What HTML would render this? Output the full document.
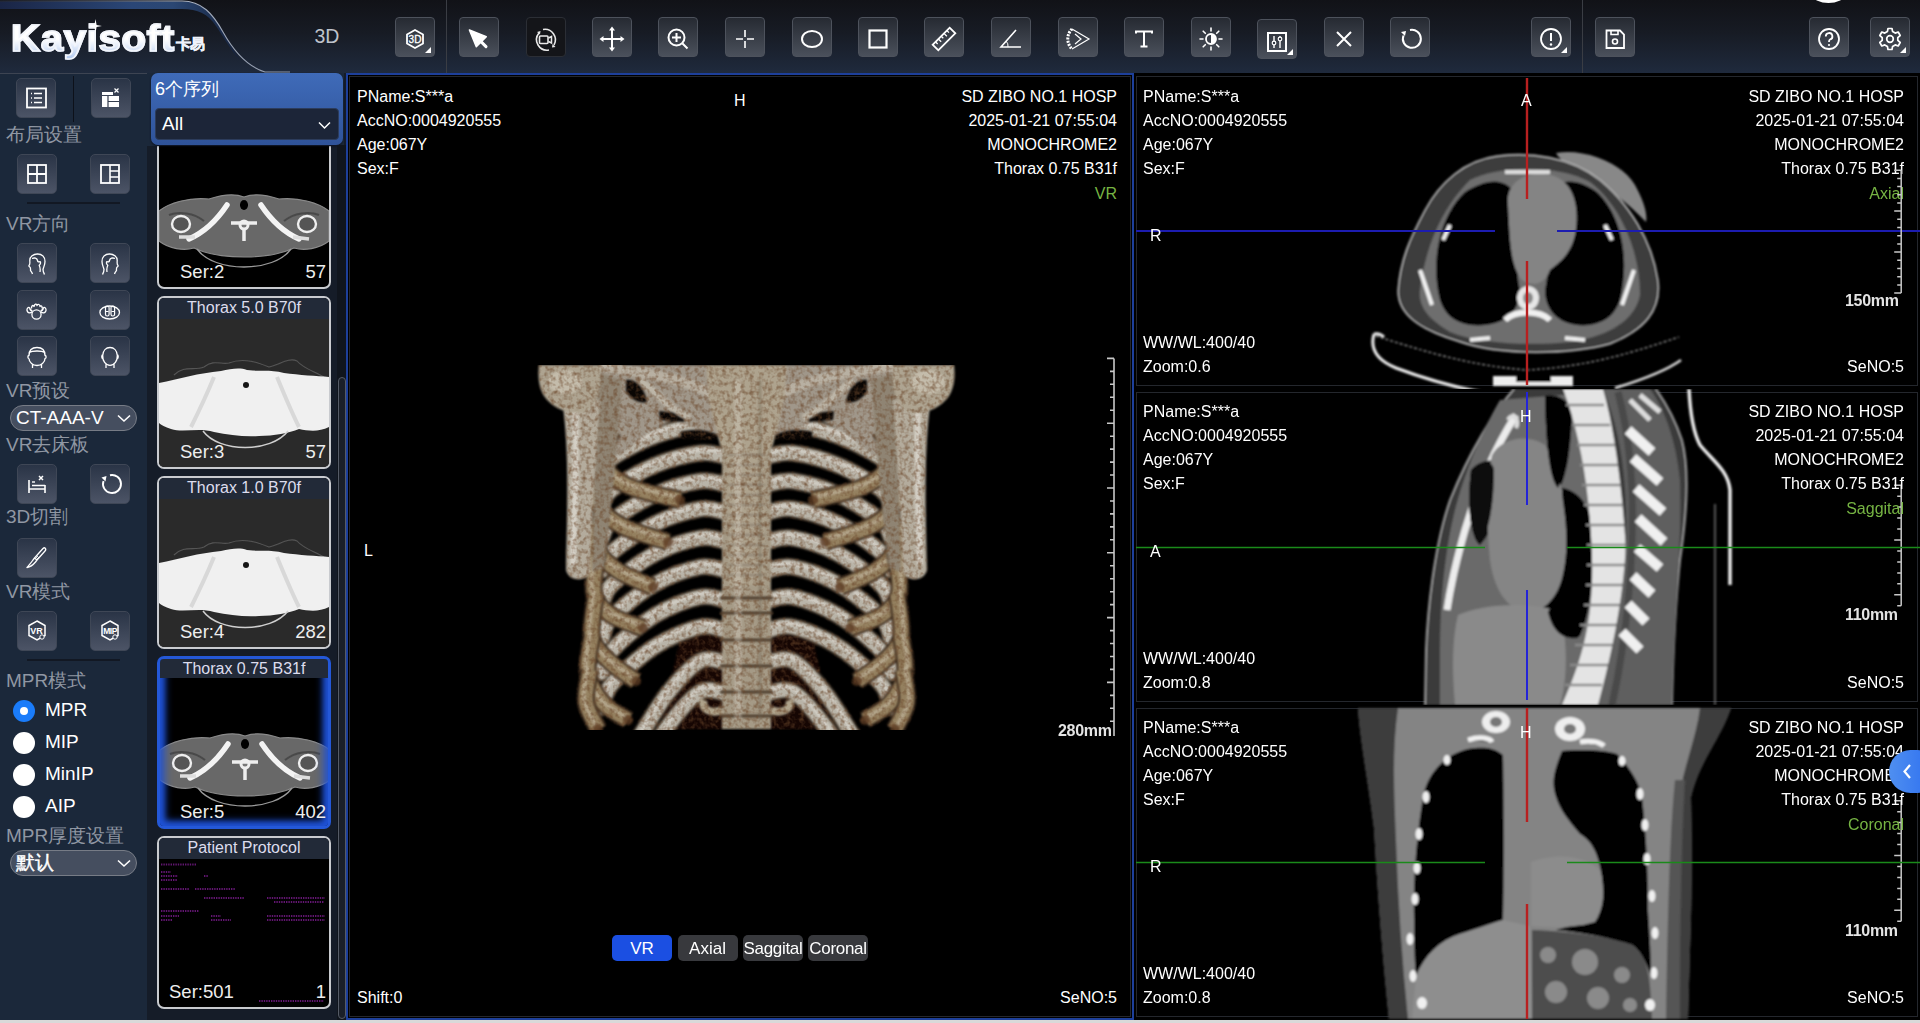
<!DOCTYPE html>
<html><head><meta charset="utf-8">
<style>
*{box-sizing:border-box;margin:0;padding:0}
html,body{width:1920px;height:1023px;overflow:hidden;background:#d9d9d9;font-family:"Liberation Sans",sans-serif}
.abs{position:absolute}
#hdr{left:0;top:0;width:1920px;height:73px;background:linear-gradient(#111217 0%,#171b24 45%,#1f2a3d 100%)}
.tb{position:absolute;top:17px;width:40px;height:40px;border-radius:4px;border:1px solid #4d525c;background:linear-gradient(#262a32,#4a505b)}
.tb svg{position:absolute;left:0;top:1.6px;width:38px;height:38px}
.tb.act{background:#141519;border-color:#2b2e35}
.corner{position:absolute;right:3px;bottom:3px;width:0;height:0;border-left:6px solid transparent;border-bottom:6px solid #fff}
.vsep{position:absolute;top:0;width:1px;height:73px;background:#3a3d44}
#side{left:0;top:73px;width:147px;height:947px;background:#1b283a;border-top:1px solid #3d4452}
.sb{position:absolute;width:40px;height:40px;border-radius:5px;border:1px solid #3f4756;background:linear-gradient(#2a3446,#4c5466)}
.sb svg{position:absolute;left:0;top:0;width:38px;height:38px}
.lbl{position:absolute;left:6px;font-size:19px;color:#9097a3;line-height:20px;white-space:nowrap}
.hsep{position:absolute;left:27px;width:93px;height:2px;background:#121823}
.pill{position:absolute;left:10px;width:127px;height:26px;border-radius:13px;border:1px solid #777c86;background:#454e5f;color:#fff;font-size:19px;line-height:24px;padding-left:5px}
.pill svg{position:absolute;right:5px;top:7.5px}
.radio{position:absolute;left:13px;width:22px;height:22px;border-radius:50%;background:#fff}
.rl{position:absolute;left:45px;font-size:19px;color:#fff;line-height:20px;margin-top:-1px}
#ser{left:147px;top:73px;width:199px;height:947px;background:#151c28}
.card{position:absolute;left:10px;width:174px;height:173px;border:2px solid #c9cbcf;border-radius:7px;background:#000;overflow:hidden}
.card .tt{position:absolute;left:0;top:0;width:100%;height:21px;background:#222a38;color:#dde;font-size:16px;line-height:20px;text-align:center}
.card .sn{position:absolute;left:21px;bottom:5.5px;font-size:18.5px;color:#eee;line-height:20px}
.card .nm{position:absolute;right:3px;bottom:5.5px;font-size:18.5px;color:#eee;line-height:20px}
.vp{position:absolute;background:#000;overflow:hidden}
.ib{position:absolute;border:1px solid #24272d}
.ov{position:absolute;font-size:16px;color:#fff;line-height:24px;white-space:nowrap}
.ov.r{text-align:right}
.grn{color:#76b443}
.mm{font-size:16px;font-weight:bold;color:#e4e4e4;letter-spacing:-0.3px;line-height:18px}
</style></head><body>
<!-- HEADER -->
<div id="hdr" class="abs">
  <svg class="abs" style="left:0;top:0" width="300" height="73" viewBox="0 0 300 73">
    <defs>
      <linearGradient id="tabg" x1="0" y1="0" x2="1" y2="0">
        <stop offset="0" stop-color="#1a2545"/><stop offset="0.55" stop-color="#2a4676"/><stop offset="0.72" stop-color="#2b4773"/><stop offset="1" stop-color="#14203a"/>
      </linearGradient>
      <linearGradient id="tabl" x1="0" y1="0" x2="1" y2="0">
        <stop offset="0" stop-color="#5a6478" stop-opacity="0.3"/><stop offset="0.6" stop-color="#aab3c4"/><stop offset="1" stop-color="#8d96a8"/>
      </linearGradient>
    </defs>
    
    <path d="M0 1.5 H182 C202 1.5 213 14 223 32 C230 44 236 54 240 60 C232 52 224 38 216 26 C208 14 198 9 182 9 H0Z" fill="url(#tabg)"/>
    <path d="M0 1 H182 C202 1 213 14 223 32 C233 50 246 66 265 72 H290" fill="none" stroke="url(#tabl)" stroke-width="1.1"/>
  </svg>
  <div class="abs" style="left:11px;top:17px;font-size:36px;font-weight:bold;letter-spacing:0.6px;line-height:44px;white-space:nowrap;background:linear-gradient(#ffffff 50%,#aac4f0 100%);-webkit-background-clip:text;background-clip:text;-webkit-text-fill-color:transparent;-webkit-text-stroke:1.6px #f2f5fb;transform:scaleX(1.115);transform-origin:0 0">Kayisoft</div>
  <div class="abs" style="left:176px;top:34px;font-size:15px;font-weight:bold;color:#eef2fa;line-height:20px;letter-spacing:-1px;-webkit-text-stroke:0.5px #eef2fa">卡易</div>
  <svg class="abs" style="left:89px;top:19px" width="13" height="14" viewBox="0 0 13 14"><path d="M6.5 0 L7.6 5.9 L13 7 L7.6 8.1 L6.5 14 L5.4 8.1 L0 7 L5.4 5.9Z" fill="#fff"/></svg>
  <div class="abs" style="left:314.5px;top:25px;font-size:19.5px;color:#bfc3cb">3D</div>
  <div class="vsep" style="left:446px"></div>
  <div class="vsep" style="left:1582px"></div>

  <!-- 3D -->
  <div class="tb" style="left:395px"><svg viewBox="0 0 38 38"><path d="M19 10 L27 14.5 V23.5 L19 28 L11 23.5 V14.5Z" fill="none" stroke="#fff" stroke-width="1.8"/><text x="19" y="23" font-size="10" font-family="Liberation Sans" fill="#fff" stroke="#fff" stroke-width="0.3" text-anchor="middle">3D</text></svg><div class="corner"></div></div>
  <!-- cursor -->
  <div class="tb" style="left:459px"><svg viewBox="0 0 38 38"><path d="M9.4 10 L26.3 16.6 L16.3 26.6 Z" fill="#fff" stroke="#fff" stroke-width="1.5" stroke-linejoin="round"/><path d="M19 19.6 L26 26.6" stroke="#fff" stroke-width="3" stroke-linecap="round"/></svg></div>
  <!-- rotate cam -->
  <div class="tb act" style="left:526px"><svg viewBox="0 0 38 38"><path d="M12 13 A10.5 10.5 0 0 0 22 30" fill="none" stroke="#e8e8e8" stroke-width="1.6"/><path d="M16 9.5 A10.5 10.5 0 0 1 27 25" fill="none" stroke="#e8e8e8" stroke-width="1.6"/><path d="M10 12 L13.5 11 L13 14.5Z" fill="#e8e8e8"/><path d="M28.5 27 L25 27.5 L25.5 24Z" fill="#e8e8e8"/><rect x="12.5" y="16" width="8.5" height="7.5" rx="1" fill="none" stroke="#e8e8e8" stroke-width="1.6"/><path d="M21.5 18 L24.5 16.5 V23 L21.5 21.5" fill="none" stroke="#e8e8e8" stroke-width="1.5"/></svg></div>
  <!-- move -->
  <div class="tb" style="left:592px"><svg viewBox="0 0 38 38"><path d="M19 8 V30 M8 19 H30" stroke="#fff" stroke-width="2"/><path d="M19 6.5 L22 10.5 H16Z M19 31.5 L22 27.5 H16Z M6.5 19 L10.5 16 V22Z M31.5 19 L27.5 16 V22Z" fill="#fff"/></svg></div>
  <!-- zoom -->
  <div class="tb" style="left:658px"><svg viewBox="0 0 38 38"><circle cx="17.5" cy="17.5" r="8" fill="none" stroke="#fff" stroke-width="2"/><path d="M17.5 13 V22 M13 17.5 H22 M23.5 23.5 L28.5 28.5" stroke="#fff" stroke-width="2"/></svg></div>
  <!-- crosshair -->
  <div class="tb" style="left:725px"><svg viewBox="0 0 38 38"><path d="M19 10 V17 M19 21 V28 M10 19 H17 M21 19 H28" stroke="#fff" stroke-width="1.6"/></svg></div>
  <!-- ellipse -->
  <div class="tb" style="left:792px"><svg viewBox="0 0 38 38"><ellipse cx="19" cy="19" rx="10" ry="8" fill="none" stroke="#fff" stroke-width="2"/></svg></div>
  <!-- rect -->
  <div class="tb" style="left:858px"><svg viewBox="0 0 38 38"><rect x="10.5" y="10.5" width="17" height="17" fill="none" stroke="#fff" stroke-width="2.2"/></svg></div>
  <!-- ruler -->
  <div class="tb" style="left:924px"><svg viewBox="0 0 38 38"><g transform="rotate(-45 19 19)"><rect x="7" y="15" width="24" height="8" fill="none" stroke="#fff" stroke-width="1.8"/><path d="M11 15 V18 M15 15 V19 M19 15 V18 M23 15 V19 M27 15 V18" stroke="#fff" stroke-width="1.3"/></g></svg></div>
  <!-- angle -->
  <div class="tb" style="left:991px"><svg viewBox="0 0 38 38"><path d="M24 10 L9 27 H29" fill="none" stroke="#fff" stroke-width="1.6"/><path d="M14 21 A7 7 0 0 1 16 27" fill="none" stroke="#fff" stroke-width="1"/></svg></div>
  <!-- protractor -->
  <div class="tb" style="left:1058px"><svg viewBox="0 0 38 38"><path d="M13 9 A14 14 0 0 0 13 29" fill="none" stroke="#fff" stroke-width="3" stroke-dasharray="2 1.2"/><path d="M13 9 L30 19 L13 29 M16 14 L22 19 L16 24" fill="none" stroke="#fff" stroke-width="1.2"/></svg></div>
  <!-- T -->
  <div class="tb" style="left:1124px"><svg viewBox="0 0 38 38"><path d="M11 13.6 V11.4 H27 V13.6 M19 11.4 V26.6 M15.5 26.6 H22.5" fill="none" stroke="#fff" stroke-width="2"/></svg></div>
  <!-- brightness -->
  <div class="tb" style="left:1191px"><svg viewBox="0 0 38 38"><circle cx="19" cy="19" r="5" fill="none" stroke="#fff" stroke-width="1.8"/><path d="M19 14 A5 5 0 0 1 19 24Z" fill="#fff"/><path d="M19 8 V11 M19 27 V30 M8 19 H11 M27 19 H30 M11.2 11.2 L13.3 13.3 M24.7 24.7 L26.8 26.8 M26.8 11.2 L24.7 13.3 M13.3 24.7 L11.2 26.8" stroke="#fff" stroke-width="1.6" stroke-linecap="round"/></svg></div>
  <!-- sliders -->
  <div class="tb" style="left:1257px;top:19px"><svg viewBox="0 0 38 38"><rect x="10" y="11" width="18" height="18" fill="none" stroke="#fff" stroke-width="2"/><path d="M16 14 V26 M22 14 V26" stroke="#fff" stroke-width="1.4"/><circle cx="16" cy="21" r="1.8" fill="#343a45" stroke="#fff" stroke-width="1.2"/><circle cx="22" cy="17" r="1.8" fill="#343a45" stroke="#fff" stroke-width="1.2"/></svg><div class="corner"></div></div>
  <!-- X -->
  <div class="tb" style="left:1324px"><svg viewBox="0 0 38 38"><path d="M12 12 L26 26 M26 12 L12 26" stroke="#fff" stroke-width="2"/></svg></div>
  <!-- reset -->
  <div class="tb" style="left:1390px"><svg viewBox="0 0 38 38"><path d="M12.5 15.5 A9 9 0 1 0 19 10" fill="none" stroke="#fff" stroke-width="2"/><path d="M10 12 L15 11 L14 16Z" fill="#fff"/></svg></div>
  <!-- info -->
  <div class="tb" style="left:1531px"><svg viewBox="0 0 38 38"><circle cx="19" cy="19" r="10" fill="none" stroke="#fff" stroke-width="1.8"/><path d="M19 13 V21" stroke="#fff" stroke-width="2"/><circle cx="19" cy="24.5" r="1.2" fill="#fff"/></svg><div class="corner"></div></div>
  <!-- save -->
  <div class="tb" style="left:1595px"><svg viewBox="0 0 38 38"><path d="M10.5 10.5 H24 L28 14.5 V28 H10.5Z" fill="none" stroke="#fff" stroke-width="1.8"/><path d="M15 10.5 V14.5 H22 V10.5" fill="none" stroke="#fff" stroke-width="1.6"/><circle cx="19" cy="21.5" r="2.5" fill="none" stroke="#fff" stroke-width="1.6"/></svg></div>
  <!-- white blob -->
  <div class="abs" style="left:1813px;top:-12px;width:31px;height:15px;border-radius:50%;background:#fff"></div>
  <!-- help -->
  <div class="tb" style="left:1809px"><svg viewBox="0 0 38 38"><circle cx="19" cy="19" r="10" fill="none" stroke="#fff" stroke-width="1.8"/><path d="M15.8 16.5 A3.3 3.3 0 1 1 20 19.5 C19 20 19 21 19 22" fill="none" stroke="#fff" stroke-width="1.8"/><circle cx="19" cy="25" r="1.1" fill="#fff"/></svg></div>
  <!-- settings -->
  <div class="tb" style="left:1870px"><svg viewBox="0 0 38 38"><path d="M17 8.5 H21 L21.6 11.6 L24.2 13.1 L27.2 12 L29.2 15.5 L26.8 17.6 V20.4 L29.2 22.5 L27.2 26 L24.2 24.9 L21.6 26.4 L21 29.5 H17 L16.4 26.4 L13.8 24.9 L10.8 26 L8.8 22.5 L11.2 20.4 V17.6 L8.8 15.5 L10.8 12 L13.8 13.1 L16.4 11.6Z" fill="none" stroke="#fff" stroke-width="1.7" stroke-linejoin="round"/><circle cx="19" cy="19" r="3.3" fill="none" stroke="#fff" stroke-width="1.7"/></svg><div class="corner"></div></div>
</div>

<!-- SIDEBAR -->
<div id="side" class="abs">
  <div class="abs" style="left:73px;top:2px;width:1px;height:46px;background:#0d111a"></div>
  <!-- row1 -->
  <div class="sb" style="left:16px;top:4px"><svg viewBox="0 0 38 38"><rect x="10" y="9.5" width="19" height="19" fill="none" stroke="#fff" stroke-width="1.8"/><path d="M14 14.5 H15 M14 19 H15 M14 23.5 H15" stroke="#fff" stroke-width="1.6"/><path d="M17 14.5 H25 M17 19 H25 M17 23.5 H25" stroke="#fff" stroke-width="1.4"/></svg></div>
  <div class="sb" style="left:91px;top:4px"><svg viewBox="0 0 38 38"><rect x="10" y="13" width="11" height="3" fill="#fff"/><path d="M10 17 H27 V28 H10Z" fill="#fff"/><path d="M16 17 V28 M16 22.5 H27" stroke="#343d4e" stroke-width="1.2"/><path d="M22.5 9.5 L26.5 13.5 M26.5 9.5 L22.5 13.5" stroke="#fff" stroke-width="1.2"/></svg></div>
  <div class="lbl" style="top:51px">布局设置</div>
  <!-- row2 -->
  <div class="sb" style="left:17px;top:80px"><svg viewBox="0 0 38 38"><rect x="10" y="10" width="18" height="18" fill="none" stroke="#fff" stroke-width="1.8"/><path d="M19 10 V28 M10 19 H28" stroke="#fff" stroke-width="1.8"/></svg></div>
  <div class="sb" style="left:90px;top:80px"><svg viewBox="0 0 38 38"><rect x="10" y="10" width="18" height="18" fill="none" stroke="#fff" stroke-width="1.8"/><path d="M19 10 V28 M19 16 H28 M19 22 H28" stroke="#fff" stroke-width="1.6"/></svg></div>
  <div class="hsep" style="top:128px"></div>
  <div class="lbl" style="top:139.5px">VR方向</div>
  <!-- head icons -->
  <div class="sb" style="left:17px;top:169px"><svg viewBox="0 0 38 38"><path d="M14.5 30 C14 28 13 27.5 12.5 26.5 C12.5 25 12.8 24 12 23.2 C11 22.6 10.6 22 11.2 21.2 C12 20.2 12 19 11.8 17 C11.5 12.5 15.5 10 19.5 10 C24 10 27 13 27 17.5 C27 21 25.5 23 25 25.5 C25 27.5 25.8 29 26.5 30.5 M14 14.5 C16.5 13.5 19 14 19.5 16.5 C19.8 18 21 18.2 22 17.6 C23 18.5 22.5 20.5 21.2 21.2 C22 23 22.5 25 22 28" fill="none" stroke="#fff" stroke-width="1.3" stroke-linejoin="round"/></svg></div>
  <div class="sb" style="left:90px;top:169px"><svg viewBox="0 0 38 38"><g transform="translate(38 0) scale(-1 1)"><path d="M14.5 30 C14 28 13 27.5 12.5 26.5 C12.5 25 12.8 24 12 23.2 C11 22.6 10.6 22 11.2 21.2 C12 20.2 12 19 11.8 17 C11.5 12.5 15.5 10 19.5 10 C24 10 27 13 27 17.5 C27 21 25.5 23 25 25.5 C25 27.5 25.8 29 26.5 30.5 M14 14.5 C16.5 13.5 19 14 19.5 16.5 C19.8 18 21 18.2 22 17.6 C23 18.5 22.5 20.5 21.2 21.2 C22 23 22.5 25 22 28" fill="none" stroke="#fff" stroke-width="1.3" stroke-linejoin="round"/></g></svg></div>
  <div class="sb" style="left:17px;top:216px"><svg viewBox="0 0 38 38"><circle cx="18.5" cy="23.5" r="4.6" fill="none" stroke="#fff" stroke-width="1.3"/><path d="M14 21 C12 22.5 9.5 22 9 19.5 C8.7 17.5 10 16 11.5 16.5 M23 21 C25 22.5 27.5 22 28 19.5 C28.3 17.5 27 16 25.5 16.5 M11.5 16.5 C12 19 13 20 14.5 20 M25.5 16.5 C25 19 24 20 22.5 20 M13.5 17.5 C13.5 14.5 15 13.5 16 15.5 C16.5 13 18.5 12 19 14.5 C20 12.5 22 13.5 22 15.5 C23 14 24.5 15 24 17.5" fill="none" stroke="#fff" stroke-width="1.3" stroke-linejoin="round"/></svg></div>
  <div class="sb" style="left:90px;top:216px"><svg viewBox="0 0 38 38"><ellipse cx="18.7" cy="21.5" rx="9.8" ry="6.5" fill="none" stroke="#fff" stroke-width="1.3"/><rect x="14.5" y="15" width="3.6" height="10" rx="1.8" fill="none" stroke="#fff" stroke-width="1.2"/><rect x="20" y="15" width="3.6" height="10" rx="1.8" fill="none" stroke="#fff" stroke-width="1.2"/><path d="M15 20.5 H17.6 M20.5 20.5 H23" stroke="#fff" stroke-width="1"/></svg></div>
  <div class="sb" style="left:17px;top:262px"><svg viewBox="0 0 38 38"><path d="M14.5 31 V27.5 M23.5 31 V27.5 M11 21.5 C11 25.5 15 28.5 19 28.5 C23 28.5 27 25.5 27 21.5 C28.5 21.5 28.5 18.5 27 18.5 C27 13.5 24 10.5 19 10.5 C14 10.5 11 13.5 11 18.5 C9.5 18.5 9.5 21.5 11 21.5 M11.5 15.5 C14 13.5 24 13.5 26.5 15.5" fill="none" stroke="#fff" stroke-width="1.3" stroke-linejoin="round"/></svg></div>
  <div class="sb" style="left:90px;top:262px"><svg viewBox="0 0 38 38"><path d="M15 31 V27 M23 31 V27 M11.7 18.5 C11.5 24 14.5 28.3 19 28.3 C23.5 28.3 26.5 24 26.3 18.5 C26 13.5 23 10.5 19 10.5 C15 10.5 12 13.5 11.7 18.5 M11.7 18 C10.5 18 10.3 21.5 11.9 21.8 M26.3 18 C27.5 18 27.7 21.5 26.1 21.8" fill="none" stroke="#fff" stroke-width="1.3" stroke-linejoin="round"/></svg></div>
  <div class="lbl" style="top:307px">VR预设</div>
  <div class="pill" style="top:331px">CT-AAA-V<svg width="14" height="9" viewBox="0 0 14 9"><path d="M1 1.5 L7 7 L13 1.5" fill="none" stroke="#fff" stroke-width="1.6"/></svg></div>
  <div class="lbl" style="top:361px">VR去床板</div>
  <div class="sb" style="left:17px;top:390px"><svg viewBox="0 0 38 38"><path d="M11 15 V28 M27 20 V28 M11 24 H27 M14 20.5 H27" stroke="#fff" stroke-width="1.6"/><path d="M14 17 H17" stroke="#fff" stroke-width="1.4"/><path d="M21 11 L25 15 M25 11 L21 15" stroke="#fff" stroke-width="1.5"/></svg></div>
  <div class="sb" style="left:90px;top:390px"><svg viewBox="0 0 38 38"><path d="M12.5 16 A9 9 0 1 0 19 10.2" fill="none" stroke="#fff" stroke-width="1.9"/><path d="M10.5 12.5 L15.5 11 L14.5 16.5Z" fill="#fff"/></svg></div>
  <div class="lbl" style="top:433px">3D切割</div>
  <div class="sb" style="left:17px;top:464px"><svg viewBox="0 0 38 38"><path d="M27 9 C28 10 28 11 27 12 L19 21 L16.5 19 L25 9.5 C25.5 9 26.5 8.5 27 9Z M16.5 19 L19 21 L17.5 23 C15 26 12 28 9 28.5 C11 26 13 24 15 21Z" fill="none" stroke="#fff" stroke-width="1.3" stroke-linejoin="round"/><path d="M18 18 L20 20 M19 17 L21 19" stroke="#fff" stroke-width="0.8"/></svg></div>
  <div class="lbl" style="top:507.5px">VR模式</div>
  <div class="sb" style="left:17px;top:537px"><svg viewBox="0 0 38 38"><path d="M19 9 L27 13.5 V23.5 L19 28 L11 23.5 V13.5Z" fill="none" stroke="#fff" stroke-width="1.5"/><text x="18.5" y="22" font-size="9" font-weight="bold" font-family="Liberation Sans" fill="#fff" text-anchor="middle">VR</text><circle cx="24" cy="25" r="2.2" fill="#3a4354" stroke="#fff" stroke-width="1"/></svg></div>
  <div class="sb" style="left:90px;top:537px"><svg viewBox="0 0 38 38"><path d="M19 9 L27 13.5 V23.5 L19 28 L11 23.5 V13.5Z" fill="none" stroke="#fff" stroke-width="1.5"/><text x="19" y="22" font-size="8.5" font-weight="bold" font-family="Liberation Sans" fill="#fff" text-anchor="middle" letter-spacing="-0.5">MIP</text><circle cx="24" cy="25" r="2.2" fill="#3a4354" stroke="#fff" stroke-width="1"/></svg></div>
  <div class="hsep" style="top:585px"></div>
  <div class="lbl" style="top:597px">MPR模式</div>
  <div class="radio" style="top:626px;background:#1a7cfa"><div class="abs" style="left:7px;top:7px;width:8px;height:8px;border-radius:50%;background:#fff"></div></div>
  <div class="rl" style="top:627px">MPR</div>
  <div class="radio" style="top:658px"></div><div class="rl" style="top:659px">MIP</div>
  <div class="radio" style="top:690px"></div><div class="rl" style="top:691px">MinIP</div>
  <div class="radio" style="top:722px"></div><div class="rl" style="top:723px">AIP</div>
  <div class="lbl" style="top:752px">MPR厚度设置</div>
  <div class="pill" style="top:776px;font-size:19px;-webkit-text-stroke:0.4px #fff">默认<svg width="14" height="9" viewBox="0 0 14 9"><path d="M1 1.5 L7 7 L13 1.5" fill="none" stroke="#fff" stroke-width="1.6"/></svg></div>
</div>

<!-- SERIES -->
<div id="ser" class="abs">
  <!-- symbols -->
  <svg width="0" height="0" style="position:absolute">
    <defs>
      <filter id="bl1"><feGaussianBlur stdDeviation="0.6"/></filter>
      <symbol id="neck" viewBox="0 0 170 82">
        <path d="M0 20 C10 12 30 6 50 8 C62 4 75 2 85 6 C95 2 108 4 120 8 C140 6 160 12 170 20 L170 50 C160 58 145 60 135 57 C120 64 100 66 85 66 C70 66 50 64 35 57 C25 60 10 58 0 50Z" fill="#676767" stroke="#8a8a8a" stroke-width="1.2"/>
        <path d="M10 24 C20 20 35 22 45 30 M160 24 C150 20 135 22 125 30" fill="none" stroke="#4a4a4a" stroke-width="2"/>
        <path d="M38 58 C55 82 115 82 132 58" fill="none" stroke="#9a9a9a" stroke-width="1.3"/>
        <ellipse cx="22" cy="33" rx="9" ry="8" fill="#555" stroke="#efefef" stroke-width="2.4"/>
        <ellipse cx="148" cy="33" rx="9" ry="8" fill="#555" stroke="#efefef" stroke-width="2.4"/>
        <path d="M68 14 C60 26 48 40 30 48" fill="none" stroke="#f4f4f4" stroke-width="5.5" stroke-linecap="round"/>
        <path d="M102 14 C110 26 122 40 140 48" fill="none" stroke="#f4f4f4" stroke-width="5.5" stroke-linecap="round"/>
        <path d="M20 46 L36 46 M134 46 L150 48" stroke="#ddd" stroke-width="3.5"/>
        <circle cx="85" cy="34" r="5.5" fill="#eee"/><circle cx="85" cy="34" r="2.5" fill="#777"/>
        <path d="M72 32 H98 M85 38 V50" stroke="#eee" stroke-width="3.5"/>
        <ellipse cx="85" cy="14" rx="4" ry="5" fill="#000"/>
      </symbol>
      <symbol id="mip" viewBox="0 0 170 148">
        <rect width="170" height="148" fill="#2b2b2b"/>
        <path d="M15 56 C25 46 35 52 45 48 C55 40 62 46 70 44 C85 38 100 44 110 48 C120 46 130 38 138 42 C145 50 155 52 165 58" fill="none" stroke="#555" stroke-width="1.1"/>
        <path d="M0 64 C20 60 40 54 62 52 C72 50 80 48 88 51 C100 53 110 50 125 54 C140 56 158 57 170 58 L170 108 C160 113 150 112 140 110 C130 114 115 117 100 117 C85 118 70 116 55 113 C40 108 25 114 12 110 C6 108 2 106 0 104Z" fill="#f0f0f0"/>
        <path d="M55 58 C48 75 40 92 32 108 M118 58 C125 75 132 92 140 108" fill="none" stroke="#d8d8d8" stroke-width="4"/>
        <circle cx="87" cy="66" r="3" fill="#151515"/>
        <path d="M44 112 C60 134 112 134 129 112" fill="none" stroke="#cfcfcf" stroke-width="1.5"/>
      </symbol>
    </defs>
  </svg>
  <!-- card1 -->
  <div class="card" style="left:10px;top:43px">
    <svg class="abs" style="left:0;top:73px" width="170" height="82" viewBox="0 0 170 82" filter="url(#bl1)"><use href="#neck"/></svg>
    <div class="sn">Ser:2</div><div class="nm">57</div>
  </div>
  <!-- card2 -->
  <div class="card" style="left:10px;top:223px">
    <svg class="abs" style="left:0;top:21px" width="170" height="148" viewBox="0 0 170 148" filter="url(#bl1)"><use href="#mip"/></svg>
    <div class="tt">Thorax 5.0 B70f</div>
    <div class="sn">Ser:3</div><div class="nm">57</div>
  </div>
  <!-- card3 -->
  <div class="card" style="left:10px;top:403px">
    <svg class="abs" style="left:0;top:21px" width="170" height="148" viewBox="0 0 170 148" filter="url(#bl1)"><use href="#mip"/></svg>
    <div class="tt">Thorax 1.0 B70f</div>
    <div class="sn">Ser:4</div><div class="nm">282</div>
  </div>
  <!-- card4 selected -->
  <div class="card" style="left:10px;top:583px;border:3px solid #2458d8;box-shadow:inset 0 0 6px 3px #1d4fd0">
    <svg class="abs" style="left:0;top:71px" width="170" height="82" viewBox="0 0 170 82" filter="url(#bl1)"><use href="#neck"/></svg>
    <div class="abs" style="left:0;top:0;width:100%;height:100%;box-shadow:inset 0 0 8px 4px #1f52d6"></div>
    <div class="tt" style="height:19px;line-height:19px">Thorax 0.75 B31f</div>
    <div class="sn" style="left:20px;bottom:4.5px">Ser:5</div><div class="nm" style="right:2px;bottom:4.5px">402</div>
  </div>
  <!-- card5 -->
  <div class="card" style="left:10px;top:763px">
    <div class="tt">Patient Protocol</div>
    <svg class="abs" style="left:0;top:21px" width="170" height="150" viewBox="0 0 170 150">
      <path d="M2.0 5.5 H37.0 M2.0 13.0 H12.0 M2.0 17.0 H19.0 M45.0 17.0 H49.0 M2.0 21.0 H18.0 M2.0 30.0 H30.0 M36.0 30.0 H76.0 M45.0 39.0 H85.0 M108.0 39.0 H166.0 M115.0 43.0 H165.0 M2.0 52.0 H40.0 M2.0 57.0 H20.0 M52.0 57.0 H62.0 M108.0 57.0 H166.0 M2.0 61.0 H14.0 M52.0 61.0 H72.0 M108.0 61.0 H166.0 M100.0 142.0 H165.0" stroke="#7a1c8c" stroke-width="2.2" stroke-dasharray="1.4 1" opacity="0.8"/>
    </svg>
    <div class="sn" style="left:10px">Ser:501</div><div class="nm">1</div>
  </div>
  <!-- header -->
  <div class="abs" style="left:0;top:0;width:197px;height:73px;background:#1b283a"></div>
  <div class="abs" style="left:4px;top:0;width:192px;height:72px;border-radius:7px;background:linear-gradient(#3f6bb9,#2f5399);box-shadow:0 1px 2px #0a1020"></div>
  <div class="abs" style="left:8px;top:6px;font-size:18px;color:#fff;line-height:20px">6个序列</div>
  <div class="abs" style="left:8px;top:35px;width:184px;height:32px;border-radius:4px;background:#1c2538;border:1px solid #2c3c5c;color:#fff;font-size:19px;line-height:30px;padding-left:6px">All<svg class="abs" style="right:7px;top:12px" width="13" height="9" viewBox="0 0 13 9"><path d="M1 1.5 L6.5 7 L12 1.5" fill="none" stroke="#fff" stroke-width="1.5"/></svg></div>
  <!-- scrollbar -->
  <div class="abs" style="left:190px;top:72px;width:9px;height:875px;background:#10151d"></div>
  <div class="abs" style="left:191px;top:304px;width:8px;height:642px;border:1.5px solid #555b66;border-radius:4px;background:#1a1f28"></div>
</div>

<!-- MAIN VIEWPORT -->
<div class="abs" style="left:346px;top:73px;width:788px;height:947px;background:#1d3f9a"></div>
<div class="vp" style="left:348px;top:75px;width:784px;height:943px">
  <div class="ib" style="left:1px;top:1px;width:782px;height:941px"></div>
  <div class="ov" style="left:9px;top:10px">PName:S***a<br>AccNO:0004920555<br>Age:067Y<br>Sex:F</div>
  <div class="ov r" style="right:15px;top:10px">SD ZIBO NO.1 HOSP<br>2025-01-21 07:55:04<br>MONOCHROME2<br>Thorax 0.75 B31f<br><span class="grn" style="line-height:26px">VR</span></div>
  <div class="ov" style="left:386px;top:14px">H</div>
  <div class="ov" style="left:16px;top:464px">L</div>
  <div class="ov" style="left:9px;top:911px">Shift:0</div>
  <div class="ov r" style="right:15px;top:911px">SeNO:5</div>
  <!-- VR image -->
  <svg id="vr" class="abs" style="left:0;top:0" width="784" height="943" viewBox="348 75 784 943"><defs><filter id="vrb" x="-5%" y="-5%" width="110%" height="110%" color-interpolation-filters="sRGB"><feGaussianBlur in="SourceGraphic" stdDeviation="1" result="b"/><feTurbulence type="fractalNoise" baseFrequency="0.22" numOctaves="2" seed="3" result="n"/><feColorMatrix in="n" type="matrix" values="0 0 0 0 0.42  0 0 0 0 0.28  0 0 0 0 0.17  1.5 0 0 0 -0.62" result="nc"/><feComposite in="nc" in2="b" operator="in" result="nm"/><feMerge><feMergeNode in="b"/><feMergeNode in="nm"/></feMerge></filter><clipPath id="vrc"><rect x="530" y="365" width="435" height="364.5"/></clipPath></defs><g filter="url(#vrb)" clip-path="url(#vrc)"><path d="M680 640 L722 630 L722 729 L660 729Z M813 640 L771 630 L771 729 L833 729Z" fill="#160603"/>
<g>
<path d="M724.0 428.0 C720.0 427.5 711.5 423.7 700.0 425.0 C688.5 426.3 669.7 430.5 655.0 436.0 C640.3 441.5 620.8 452.0 612.0 458.0 C603.2 464.0 603.7 469.7 602.0 472.0" fill="none" stroke="#4a3f32" stroke-width="17.5" stroke-linecap="round"/>
<path d="M724.0 428.0 C720.0 427.5 711.5 423.7 700.0 425.0 C688.5 426.3 669.7 430.5 655.0 436.0 C640.3 441.5 620.8 452.0 612.0 458.0 C603.2 464.0 603.7 469.7 602.0 472.0" fill="none" stroke="#b9b4a8" stroke-width="14" stroke-linecap="round"/>
<path d="M724.0 428.0 C720.0 427.5 711.5 423.7 700.0 425.0 C688.5 426.3 669.7 430.5 655.0 436.0 C640.3 441.5 620.8 452.0 612.0 458.0 C603.2 464.0 603.7 469.7 602.0 472.0" fill="none" stroke="#e2dfd8" stroke-width="3.5" stroke-linecap="round" opacity="0.6" transform="translate(0,-3)"/>
<path d="M724.0 456.0 C720.0 455.5 711.5 451.5 700.0 453.0 C688.5 454.5 669.7 459.1 655.0 465.2 C640.3 471.3 620.8 482.8 612.0 489.4 C603.2 496.0 603.7 502.2 602.0 504.8" fill="none" stroke="#4a3f32" stroke-width="17.5" stroke-linecap="round"/>
<path d="M724.0 456.0 C720.0 455.5 711.5 451.5 700.0 453.0 C688.5 454.5 669.7 459.1 655.0 465.2 C640.3 471.3 620.8 482.8 612.0 489.4 C603.2 496.0 603.7 502.2 602.0 504.8" fill="none" stroke="#b9b4a8" stroke-width="14" stroke-linecap="round"/>
<path d="M724.0 456.0 C720.0 455.5 711.5 451.5 700.0 453.0 C688.5 454.5 669.7 459.1 655.0 465.2 C640.3 471.3 620.8 482.8 612.0 489.4 C603.2 496.0 603.7 502.2 602.0 504.8" fill="none" stroke="#e2dfd8" stroke-width="3.5" stroke-linecap="round" opacity="0.6" transform="translate(0,-3)"/>
<path d="M724.0 484.0 C720.0 483.5 711.5 479.3 700.0 481.0 C688.5 482.7 669.7 487.8 655.0 494.4 C640.3 501.0 620.8 513.6 612.0 520.8 C603.2 528.0 603.7 534.8 602.0 537.6" fill="none" stroke="#4a3f32" stroke-width="17.5" stroke-linecap="round"/>
<path d="M724.0 484.0 C720.0 483.5 711.5 479.3 700.0 481.0 C688.5 482.7 669.7 487.8 655.0 494.4 C640.3 501.0 620.8 513.6 612.0 520.8 C603.2 528.0 603.7 534.8 602.0 537.6" fill="none" stroke="#b9b4a8" stroke-width="14" stroke-linecap="round"/>
<path d="M724.0 484.0 C720.0 483.5 711.5 479.3 700.0 481.0 C688.5 482.7 669.7 487.8 655.0 494.4 C640.3 501.0 620.8 513.6 612.0 520.8 C603.2 528.0 603.7 534.8 602.0 537.6" fill="none" stroke="#e2dfd8" stroke-width="3.5" stroke-linecap="round" opacity="0.6" transform="translate(0,-3)"/>
<path d="M724.0 512.0 C720.0 511.5 711.5 507.1 700.0 509.0 C688.5 510.9 669.7 516.4 655.0 523.6 C640.3 530.8 620.8 544.4 612.0 552.2 C603.2 560.0 603.7 567.4 602.0 570.4" fill="none" stroke="#4a3f32" stroke-width="17.5" stroke-linecap="round"/>
<path d="M724.0 512.0 C720.0 511.5 711.5 507.1 700.0 509.0 C688.5 510.9 669.7 516.4 655.0 523.6 C640.3 530.8 620.8 544.4 612.0 552.2 C603.2 560.0 603.7 567.4 602.0 570.4" fill="none" stroke="#b9b4a8" stroke-width="14" stroke-linecap="round"/>
<path d="M724.0 512.0 C720.0 511.5 711.5 507.1 700.0 509.0 C688.5 510.9 669.7 516.4 655.0 523.6 C640.3 530.8 620.8 544.4 612.0 552.2 C603.2 560.0 603.7 567.4 602.0 570.4" fill="none" stroke="#e2dfd8" stroke-width="3.5" stroke-linecap="round" opacity="0.6" transform="translate(0,-3)"/>
<path d="M724.0 541.0 C720.0 540.5 711.5 535.9 700.0 538.0 C688.5 540.1 669.7 546.0 655.0 553.8 C640.3 561.6 620.8 576.2 612.0 584.6 C603.2 593.0 603.7 600.9 602.0 604.2" fill="none" stroke="#4a3f32" stroke-width="17.5" stroke-linecap="round"/>
<path d="M724.0 541.0 C720.0 540.5 711.5 535.9 700.0 538.0 C688.5 540.1 669.7 546.0 655.0 553.8 C640.3 561.6 620.8 576.2 612.0 584.6 C603.2 593.0 603.7 600.9 602.0 604.2" fill="none" stroke="#b9b4a8" stroke-width="14" stroke-linecap="round"/>
<path d="M724.0 541.0 C720.0 540.5 711.5 535.9 700.0 538.0 C688.5 540.1 669.7 546.0 655.0 553.8 C640.3 561.6 620.8 576.2 612.0 584.6 C603.2 593.0 603.7 600.9 602.0 604.2" fill="none" stroke="#e2dfd8" stroke-width="3.5" stroke-linecap="round" opacity="0.6" transform="translate(0,-3)"/>
<path d="M724.0 570.0 C720.0 569.5 711.5 564.7 700.0 567.0 C688.5 569.3 669.7 575.7 655.0 584.0 C640.3 592.3 620.8 608.0 612.0 617.0 C603.2 626.0 603.7 634.5 602.0 638.0" fill="none" stroke="#4a3f32" stroke-width="17.5" stroke-linecap="round"/>
<path d="M724.0 570.0 C720.0 569.5 711.5 564.7 700.0 567.0 C688.5 569.3 669.7 575.7 655.0 584.0 C640.3 592.3 620.8 608.0 612.0 617.0 C603.2 626.0 603.7 634.5 602.0 638.0" fill="none" stroke="#b9b4a8" stroke-width="14" stroke-linecap="round"/>
<path d="M724.0 570.0 C720.0 569.5 711.5 564.7 700.0 567.0 C688.5 569.3 669.7 575.7 655.0 584.0 C640.3 592.3 620.8 608.0 612.0 617.0 C603.2 626.0 603.7 634.5 602.0 638.0" fill="none" stroke="#e2dfd8" stroke-width="3.5" stroke-linecap="round" opacity="0.6" transform="translate(0,-3)"/>
<path d="M724.0 600.0 C720.0 599.5 711.5 594.5 700.0 597.0 C688.5 599.5 669.7 606.3 655.0 615.2 C640.3 624.1 620.8 640.8 612.0 650.4 C603.2 660.0 603.7 669.1 602.0 672.8" fill="none" stroke="#4a3f32" stroke-width="17.5" stroke-linecap="round"/>
<path d="M724.0 600.0 C720.0 599.5 711.5 594.5 700.0 597.0 C688.5 599.5 669.7 606.3 655.0 615.2 C640.3 624.1 620.8 640.8 612.0 650.4 C603.2 660.0 603.7 669.1 602.0 672.8" fill="none" stroke="#b9b4a8" stroke-width="14" stroke-linecap="round"/>
<path d="M724.0 600.0 C720.0 599.5 711.5 594.5 700.0 597.0 C688.5 599.5 669.7 606.3 655.0 615.2 C640.3 624.1 620.8 640.8 612.0 650.4 C603.2 660.0 603.7 669.1 602.0 672.8" fill="none" stroke="#e2dfd8" stroke-width="3.5" stroke-linecap="round" opacity="0.6" transform="translate(0,-3)"/>
<path d="M724.0 630.0 C720.0 629.5 711.5 624.3 700.0 627.0 C688.5 629.7 669.7 636.9 655.0 646.4 C640.3 655.9 620.8 673.6 612.0 683.8 C603.2 694.0 603.7 703.6 602.0 707.6" fill="none" stroke="#4a3f32" stroke-width="17.5" stroke-linecap="round"/>
<path d="M724.0 630.0 C720.0 629.5 711.5 624.3 700.0 627.0 C688.5 629.7 669.7 636.9 655.0 646.4 C640.3 655.9 620.8 673.6 612.0 683.8 C603.2 694.0 603.7 703.6 602.0 707.6" fill="none" stroke="#b9b4a8" stroke-width="14" stroke-linecap="round"/>
<path d="M724.0 630.0 C720.0 629.5 711.5 624.3 700.0 627.0 C688.5 629.7 669.7 636.9 655.0 646.4 C640.3 655.9 620.8 673.6 612.0 683.8 C603.2 694.0 603.7 703.6 602.0 707.6" fill="none" stroke="#e2dfd8" stroke-width="3.5" stroke-linecap="round" opacity="0.6" transform="translate(0,-3)"/>
<path d="M724.0 662.0 C720.0 661.8 709.3 655.8 700.0 661.0 C690.7 666.2 678.0 680.5 668.0 693.0 C658.0 705.5 644.7 729.0 640.0 736.2" fill="none" stroke="#4a3f32" stroke-width="17.5" stroke-linecap="round"/>
<path d="M724.0 662.0 C720.0 661.8 709.3 655.8 700.0 661.0 C690.7 666.2 678.0 680.5 668.0 693.0 C658.0 705.5 644.7 729.0 640.0 736.2" fill="none" stroke="#b9b4a8" stroke-width="14" stroke-linecap="round"/>
<path d="M724.0 662.0 C720.0 661.8 709.3 655.8 700.0 661.0 C690.7 666.2 678.0 680.5 668.0 693.0 C658.0 705.5 644.7 729.0 640.0 736.2" fill="none" stroke="#e2dfd8" stroke-width="3.5" stroke-linecap="round" opacity="0.6" transform="translate(0,-3)"/>
<path d="M724.0 693.0 C720.0 692.8 709.3 686.5 700.0 692.0 C690.7 697.5 678.0 712.7 668.0 726.0 C658.0 739.3 644.7 764.0 640.0 771.6" fill="none" stroke="#4a3f32" stroke-width="17.5" stroke-linecap="round"/>
<path d="M724.0 693.0 C720.0 692.8 709.3 686.5 700.0 692.0 C690.7 697.5 678.0 712.7 668.0 726.0 C658.0 739.3 644.7 764.0 640.0 771.6" fill="none" stroke="#b9b4a8" stroke-width="14" stroke-linecap="round"/>
<path d="M724.0 693.0 C720.0 692.8 709.3 686.5 700.0 692.0 C690.7 697.5 678.0 712.7 668.0 726.0 C658.0 739.3 644.7 764.0 640.0 771.6" fill="none" stroke="#e2dfd8" stroke-width="3.5" stroke-linecap="round" opacity="0.6" transform="translate(0,-3)"/>
</g>
<g transform="translate(1493.0 0) scale(-1 1)">
<path d="M724.0 428.0 C720.0 427.5 711.5 423.7 700.0 425.0 C688.5 426.3 669.7 430.5 655.0 436.0 C640.3 441.5 620.8 452.0 612.0 458.0 C603.2 464.0 603.7 469.7 602.0 472.0" fill="none" stroke="#4a3f32" stroke-width="17.5" stroke-linecap="round"/>
<path d="M724.0 428.0 C720.0 427.5 711.5 423.7 700.0 425.0 C688.5 426.3 669.7 430.5 655.0 436.0 C640.3 441.5 620.8 452.0 612.0 458.0 C603.2 464.0 603.7 469.7 602.0 472.0" fill="none" stroke="#b9b4a8" stroke-width="14" stroke-linecap="round"/>
<path d="M724.0 428.0 C720.0 427.5 711.5 423.7 700.0 425.0 C688.5 426.3 669.7 430.5 655.0 436.0 C640.3 441.5 620.8 452.0 612.0 458.0 C603.2 464.0 603.7 469.7 602.0 472.0" fill="none" stroke="#e2dfd8" stroke-width="3.5" stroke-linecap="round" opacity="0.6" transform="translate(0,-3)"/>
<path d="M724.0 456.0 C720.0 455.5 711.5 451.5 700.0 453.0 C688.5 454.5 669.7 459.1 655.0 465.2 C640.3 471.3 620.8 482.8 612.0 489.4 C603.2 496.0 603.7 502.2 602.0 504.8" fill="none" stroke="#4a3f32" stroke-width="17.5" stroke-linecap="round"/>
<path d="M724.0 456.0 C720.0 455.5 711.5 451.5 700.0 453.0 C688.5 454.5 669.7 459.1 655.0 465.2 C640.3 471.3 620.8 482.8 612.0 489.4 C603.2 496.0 603.7 502.2 602.0 504.8" fill="none" stroke="#b9b4a8" stroke-width="14" stroke-linecap="round"/>
<path d="M724.0 456.0 C720.0 455.5 711.5 451.5 700.0 453.0 C688.5 454.5 669.7 459.1 655.0 465.2 C640.3 471.3 620.8 482.8 612.0 489.4 C603.2 496.0 603.7 502.2 602.0 504.8" fill="none" stroke="#e2dfd8" stroke-width="3.5" stroke-linecap="round" opacity="0.6" transform="translate(0,-3)"/>
<path d="M724.0 484.0 C720.0 483.5 711.5 479.3 700.0 481.0 C688.5 482.7 669.7 487.8 655.0 494.4 C640.3 501.0 620.8 513.6 612.0 520.8 C603.2 528.0 603.7 534.8 602.0 537.6" fill="none" stroke="#4a3f32" stroke-width="17.5" stroke-linecap="round"/>
<path d="M724.0 484.0 C720.0 483.5 711.5 479.3 700.0 481.0 C688.5 482.7 669.7 487.8 655.0 494.4 C640.3 501.0 620.8 513.6 612.0 520.8 C603.2 528.0 603.7 534.8 602.0 537.6" fill="none" stroke="#b9b4a8" stroke-width="14" stroke-linecap="round"/>
<path d="M724.0 484.0 C720.0 483.5 711.5 479.3 700.0 481.0 C688.5 482.7 669.7 487.8 655.0 494.4 C640.3 501.0 620.8 513.6 612.0 520.8 C603.2 528.0 603.7 534.8 602.0 537.6" fill="none" stroke="#e2dfd8" stroke-width="3.5" stroke-linecap="round" opacity="0.6" transform="translate(0,-3)"/>
<path d="M724.0 512.0 C720.0 511.5 711.5 507.1 700.0 509.0 C688.5 510.9 669.7 516.4 655.0 523.6 C640.3 530.8 620.8 544.4 612.0 552.2 C603.2 560.0 603.7 567.4 602.0 570.4" fill="none" stroke="#4a3f32" stroke-width="17.5" stroke-linecap="round"/>
<path d="M724.0 512.0 C720.0 511.5 711.5 507.1 700.0 509.0 C688.5 510.9 669.7 516.4 655.0 523.6 C640.3 530.8 620.8 544.4 612.0 552.2 C603.2 560.0 603.7 567.4 602.0 570.4" fill="none" stroke="#b9b4a8" stroke-width="14" stroke-linecap="round"/>
<path d="M724.0 512.0 C720.0 511.5 711.5 507.1 700.0 509.0 C688.5 510.9 669.7 516.4 655.0 523.6 C640.3 530.8 620.8 544.4 612.0 552.2 C603.2 560.0 603.7 567.4 602.0 570.4" fill="none" stroke="#e2dfd8" stroke-width="3.5" stroke-linecap="round" opacity="0.6" transform="translate(0,-3)"/>
<path d="M724.0 541.0 C720.0 540.5 711.5 535.9 700.0 538.0 C688.5 540.1 669.7 546.0 655.0 553.8 C640.3 561.6 620.8 576.2 612.0 584.6 C603.2 593.0 603.7 600.9 602.0 604.2" fill="none" stroke="#4a3f32" stroke-width="17.5" stroke-linecap="round"/>
<path d="M724.0 541.0 C720.0 540.5 711.5 535.9 700.0 538.0 C688.5 540.1 669.7 546.0 655.0 553.8 C640.3 561.6 620.8 576.2 612.0 584.6 C603.2 593.0 603.7 600.9 602.0 604.2" fill="none" stroke="#b9b4a8" stroke-width="14" stroke-linecap="round"/>
<path d="M724.0 541.0 C720.0 540.5 711.5 535.9 700.0 538.0 C688.5 540.1 669.7 546.0 655.0 553.8 C640.3 561.6 620.8 576.2 612.0 584.6 C603.2 593.0 603.7 600.9 602.0 604.2" fill="none" stroke="#e2dfd8" stroke-width="3.5" stroke-linecap="round" opacity="0.6" transform="translate(0,-3)"/>
<path d="M724.0 570.0 C720.0 569.5 711.5 564.7 700.0 567.0 C688.5 569.3 669.7 575.7 655.0 584.0 C640.3 592.3 620.8 608.0 612.0 617.0 C603.2 626.0 603.7 634.5 602.0 638.0" fill="none" stroke="#4a3f32" stroke-width="17.5" stroke-linecap="round"/>
<path d="M724.0 570.0 C720.0 569.5 711.5 564.7 700.0 567.0 C688.5 569.3 669.7 575.7 655.0 584.0 C640.3 592.3 620.8 608.0 612.0 617.0 C603.2 626.0 603.7 634.5 602.0 638.0" fill="none" stroke="#b9b4a8" stroke-width="14" stroke-linecap="round"/>
<path d="M724.0 570.0 C720.0 569.5 711.5 564.7 700.0 567.0 C688.5 569.3 669.7 575.7 655.0 584.0 C640.3 592.3 620.8 608.0 612.0 617.0 C603.2 626.0 603.7 634.5 602.0 638.0" fill="none" stroke="#e2dfd8" stroke-width="3.5" stroke-linecap="round" opacity="0.6" transform="translate(0,-3)"/>
<path d="M724.0 600.0 C720.0 599.5 711.5 594.5 700.0 597.0 C688.5 599.5 669.7 606.3 655.0 615.2 C640.3 624.1 620.8 640.8 612.0 650.4 C603.2 660.0 603.7 669.1 602.0 672.8" fill="none" stroke="#4a3f32" stroke-width="17.5" stroke-linecap="round"/>
<path d="M724.0 600.0 C720.0 599.5 711.5 594.5 700.0 597.0 C688.5 599.5 669.7 606.3 655.0 615.2 C640.3 624.1 620.8 640.8 612.0 650.4 C603.2 660.0 603.7 669.1 602.0 672.8" fill="none" stroke="#b9b4a8" stroke-width="14" stroke-linecap="round"/>
<path d="M724.0 600.0 C720.0 599.5 711.5 594.5 700.0 597.0 C688.5 599.5 669.7 606.3 655.0 615.2 C640.3 624.1 620.8 640.8 612.0 650.4 C603.2 660.0 603.7 669.1 602.0 672.8" fill="none" stroke="#e2dfd8" stroke-width="3.5" stroke-linecap="round" opacity="0.6" transform="translate(0,-3)"/>
<path d="M724.0 630.0 C720.0 629.5 711.5 624.3 700.0 627.0 C688.5 629.7 669.7 636.9 655.0 646.4 C640.3 655.9 620.8 673.6 612.0 683.8 C603.2 694.0 603.7 703.6 602.0 707.6" fill="none" stroke="#4a3f32" stroke-width="17.5" stroke-linecap="round"/>
<path d="M724.0 630.0 C720.0 629.5 711.5 624.3 700.0 627.0 C688.5 629.7 669.7 636.9 655.0 646.4 C640.3 655.9 620.8 673.6 612.0 683.8 C603.2 694.0 603.7 703.6 602.0 707.6" fill="none" stroke="#b9b4a8" stroke-width="14" stroke-linecap="round"/>
<path d="M724.0 630.0 C720.0 629.5 711.5 624.3 700.0 627.0 C688.5 629.7 669.7 636.9 655.0 646.4 C640.3 655.9 620.8 673.6 612.0 683.8 C603.2 694.0 603.7 703.6 602.0 707.6" fill="none" stroke="#e2dfd8" stroke-width="3.5" stroke-linecap="round" opacity="0.6" transform="translate(0,-3)"/>
<path d="M724.0 662.0 C720.0 661.8 709.3 655.8 700.0 661.0 C690.7 666.2 678.0 680.5 668.0 693.0 C658.0 705.5 644.7 729.0 640.0 736.2" fill="none" stroke="#4a3f32" stroke-width="17.5" stroke-linecap="round"/>
<path d="M724.0 662.0 C720.0 661.8 709.3 655.8 700.0 661.0 C690.7 666.2 678.0 680.5 668.0 693.0 C658.0 705.5 644.7 729.0 640.0 736.2" fill="none" stroke="#b9b4a8" stroke-width="14" stroke-linecap="round"/>
<path d="M724.0 662.0 C720.0 661.8 709.3 655.8 700.0 661.0 C690.7 666.2 678.0 680.5 668.0 693.0 C658.0 705.5 644.7 729.0 640.0 736.2" fill="none" stroke="#e2dfd8" stroke-width="3.5" stroke-linecap="round" opacity="0.6" transform="translate(0,-3)"/>
<path d="M724.0 693.0 C720.0 692.8 709.3 686.5 700.0 692.0 C690.7 697.5 678.0 712.7 668.0 726.0 C658.0 739.3 644.7 764.0 640.0 771.6" fill="none" stroke="#4a3f32" stroke-width="17.5" stroke-linecap="round"/>
<path d="M724.0 693.0 C720.0 692.8 709.3 686.5 700.0 692.0 C690.7 697.5 678.0 712.7 668.0 726.0 C658.0 739.3 644.7 764.0 640.0 771.6" fill="none" stroke="#b9b4a8" stroke-width="14" stroke-linecap="round"/>
<path d="M724.0 693.0 C720.0 692.8 709.3 686.5 700.0 692.0 C690.7 697.5 678.0 712.7 668.0 726.0 C658.0 739.3 644.7 764.0 640.0 771.6" fill="none" stroke="#e2dfd8" stroke-width="3.5" stroke-linecap="round" opacity="0.6" transform="translate(0,-3)"/>
</g>
<g>
<path d="M590 365 H746 V440 L722 440 C700 432 690 425 675 420 C655 425 640 440 620 455 L600 455 C596 420 594 390 590 365Z" fill="#a0978a"/>
<path d="M626 380 C635 378 645 388 647 402 C640 404 632 400 626 392Z" fill="#0a0604"/>
<path d="M659 411 L686 414 L684 422 L660 420Z" fill="#0a0604"/>
<path d="M680 432 C695 428 712 430 722 438 C710 440 695 440 682 438Z" fill="#0a0604"/>
<path d="M600 366 C640 372 690 378 722 400" fill="none" stroke="#b8b0a2" stroke-width="10"/>
<path d="M640 380 C660 395 670 410 690 418" fill="none" stroke="#bdb6a8" stroke-width="7"/>
</g>
<g transform="translate(1493.0 0) scale(-1 1)">
<path d="M590 365 H746 V440 L722 440 C700 432 690 425 675 420 C655 425 640 440 620 455 L600 455 C596 420 594 390 590 365Z" fill="#a0978a"/>
<path d="M626 380 C635 378 645 388 647 402 C640 404 632 400 626 392Z" fill="#0a0604"/>
<path d="M659 411 L686 414 L684 422 L660 420Z" fill="#0a0604"/>
<path d="M680 432 C695 428 712 430 722 438 C710 440 695 440 682 438Z" fill="#0a0604"/>
<path d="M600 366 C640 372 690 378 722 400" fill="none" stroke="#b8b0a2" stroke-width="10"/>
<path d="M640 380 C660 395 670 410 690 418" fill="none" stroke="#bdb6a8" stroke-width="7"/>
</g>
<g>
<path d="M612.0 432.0 C610.5 437.0 600.3 453.0 603.0 462.0 C605.7 471.0 615.2 479.7 628.0 486.0 C640.8 492.3 671.3 497.7 680.0 500.0" fill="none" stroke="#3b2a1c" stroke-width="18" stroke-linecap="butt"/>
<path d="M612.0 432.0 C610.5 437.0 600.3 453.0 603.0 462.0 C605.7 471.0 615.2 479.7 628.0 486.0 C640.8 492.3 671.3 497.7 680.0 500.0" fill="none" stroke="#94805f" stroke-width="14" stroke-linecap="butt"/>
<path d="M612.0 432.0 C610.5 437.0 600.3 453.0 603.0 462.0 C605.7 471.0 615.2 479.7 628.0 486.0 C640.8 492.3 671.3 497.7 680.0 500.0" fill="none" stroke="#c8bea9" stroke-width="4" opacity="0.6" transform="translate(-2,-3)"/>
<circle cx="680.0" cy="500.0" r="5" fill="#5a3a22" opacity="0.8"/>
<path d="M605.0 470.0 C604.2 475.8 597.2 495.7 600.0 505.0 C602.8 514.3 610.7 519.8 622.0 526.0 C633.3 532.2 660.3 539.3 668.0 542.0" fill="none" stroke="#3b2a1c" stroke-width="18" stroke-linecap="butt"/>
<path d="M605.0 470.0 C604.2 475.8 597.2 495.7 600.0 505.0 C602.8 514.3 610.7 519.8 622.0 526.0 C633.3 532.2 660.3 539.3 668.0 542.0" fill="none" stroke="#94805f" stroke-width="14" stroke-linecap="butt"/>
<path d="M605.0 470.0 C604.2 475.8 597.2 495.7 600.0 505.0 C602.8 514.3 610.7 519.8 622.0 526.0 C633.3 532.2 660.3 539.3 668.0 542.0" fill="none" stroke="#c8bea9" stroke-width="4" opacity="0.6" transform="translate(-2,-3)"/>
<circle cx="668.0" cy="542.0" r="5" fill="#5a3a22" opacity="0.8"/>
<path d="M602.0 510.0 C601.3 516.3 595.5 538.0 598.0 548.0 C600.5 558.0 607.8 563.5 617.0 570.0 C626.2 576.5 647.0 584.2 653.0 587.0" fill="none" stroke="#3b2a1c" stroke-width="18" stroke-linecap="butt"/>
<path d="M602.0 510.0 C601.3 516.3 595.5 538.0 598.0 548.0 C600.5 558.0 607.8 563.5 617.0 570.0 C626.2 576.5 647.0 584.2 653.0 587.0" fill="none" stroke="#94805f" stroke-width="14" stroke-linecap="butt"/>
<path d="M602.0 510.0 C601.3 516.3 595.5 538.0 598.0 548.0 C600.5 558.0 607.8 563.5 617.0 570.0 C626.2 576.5 647.0 584.2 653.0 587.0" fill="none" stroke="#c8bea9" stroke-width="4" opacity="0.6" transform="translate(-2,-3)"/>
<circle cx="653.0" cy="587.0" r="5" fill="#5a3a22" opacity="0.8"/>
<path d="M598.0 552.0 C597.3 558.8 591.8 582.5 594.0 593.0 C596.2 603.5 602.8 609.2 611.0 615.0 C619.2 620.8 637.7 625.8 643.0 628.0" fill="none" stroke="#3b2a1c" stroke-width="18" stroke-linecap="butt"/>
<path d="M598.0 552.0 C597.3 558.8 591.8 582.5 594.0 593.0 C596.2 603.5 602.8 609.2 611.0 615.0 C619.2 620.8 637.7 625.8 643.0 628.0" fill="none" stroke="#94805f" stroke-width="14" stroke-linecap="butt"/>
<path d="M598.0 552.0 C597.3 558.8 591.8 582.5 594.0 593.0 C596.2 603.5 602.8 609.2 611.0 615.0 C619.2 620.8 637.7 625.8 643.0 628.0" fill="none" stroke="#c8bea9" stroke-width="4" opacity="0.6" transform="translate(-2,-3)"/>
<circle cx="643.0" cy="628.0" r="5" fill="#5a3a22" opacity="0.8"/>
<path d="M596.0 594.0 C595.3 601.2 589.8 625.8 592.0 637.0 C594.2 648.2 601.7 653.7 609.0 661.0 C616.3 668.3 631.5 677.7 636.0 681.0" fill="none" stroke="#3b2a1c" stroke-width="18" stroke-linecap="butt"/>
<path d="M596.0 594.0 C595.3 601.2 589.8 625.8 592.0 637.0 C594.2 648.2 601.7 653.7 609.0 661.0 C616.3 668.3 631.5 677.7 636.0 681.0" fill="none" stroke="#94805f" stroke-width="14" stroke-linecap="butt"/>
<path d="M596.0 594.0 C595.3 601.2 589.8 625.8 592.0 637.0 C594.2 648.2 601.7 653.7 609.0 661.0 C616.3 668.3 631.5 677.7 636.0 681.0" fill="none" stroke="#c8bea9" stroke-width="4" opacity="0.6" transform="translate(-2,-3)"/>
<circle cx="636.0" cy="681.0" r="5" fill="#5a3a22" opacity="0.8"/>
<path d="M592.0 636.0 C591.3 642.2 586.2 661.8 588.0 673.0 C589.8 684.2 596.3 695.2 603.0 703.0 C609.7 710.8 623.8 717.2 628.0 720.0" fill="none" stroke="#3b2a1c" stroke-width="18" stroke-linecap="butt"/>
<path d="M592.0 636.0 C591.3 642.2 586.2 661.8 588.0 673.0 C589.8 684.2 596.3 695.2 603.0 703.0 C609.7 710.8 623.8 717.2 628.0 720.0" fill="none" stroke="#94805f" stroke-width="14" stroke-linecap="butt"/>
<path d="M592.0 636.0 C591.3 642.2 586.2 661.8 588.0 673.0 C589.8 684.2 596.3 695.2 603.0 703.0 C609.7 710.8 623.8 717.2 628.0 720.0" fill="none" stroke="#c8bea9" stroke-width="4" opacity="0.6" transform="translate(-2,-3)"/>
<circle cx="628.0" cy="720.0" r="5" fill="#5a3a22" opacity="0.8"/>
<path d="M590.0 670.0 C589.3 675.3 584.7 692.2 586.0 702.0 C587.3 711.8 596.0 724.5 598.0 729.0" fill="none" stroke="#3b2a1c" stroke-width="18" stroke-linecap="butt"/>
<path d="M590.0 670.0 C589.3 675.3 584.7 692.2 586.0 702.0 C587.3 711.8 596.0 724.5 598.0 729.0" fill="none" stroke="#94805f" stroke-width="14" stroke-linecap="butt"/>
<path d="M590.0 670.0 C589.3 675.3 584.7 692.2 586.0 702.0 C587.3 711.8 596.0 724.5 598.0 729.0" fill="none" stroke="#c8bea9" stroke-width="4" opacity="0.6" transform="translate(-2,-3)"/>
<circle cx="598.0" cy="729.0" r="5" fill="#5a3a22" opacity="0.8"/>
</g>
<g transform="translate(1493.0 0) scale(-1 1)">
<path d="M612.0 432.0 C610.5 437.0 600.3 453.0 603.0 462.0 C605.7 471.0 615.2 479.7 628.0 486.0 C640.8 492.3 671.3 497.7 680.0 500.0" fill="none" stroke="#3b2a1c" stroke-width="18" stroke-linecap="butt"/>
<path d="M612.0 432.0 C610.5 437.0 600.3 453.0 603.0 462.0 C605.7 471.0 615.2 479.7 628.0 486.0 C640.8 492.3 671.3 497.7 680.0 500.0" fill="none" stroke="#94805f" stroke-width="14" stroke-linecap="butt"/>
<path d="M612.0 432.0 C610.5 437.0 600.3 453.0 603.0 462.0 C605.7 471.0 615.2 479.7 628.0 486.0 C640.8 492.3 671.3 497.7 680.0 500.0" fill="none" stroke="#c8bea9" stroke-width="4" opacity="0.6" transform="translate(-2,-3)"/>
<circle cx="680.0" cy="500.0" r="5" fill="#5a3a22" opacity="0.8"/>
<path d="M605.0 470.0 C604.2 475.8 597.2 495.7 600.0 505.0 C602.8 514.3 610.7 519.8 622.0 526.0 C633.3 532.2 660.3 539.3 668.0 542.0" fill="none" stroke="#3b2a1c" stroke-width="18" stroke-linecap="butt"/>
<path d="M605.0 470.0 C604.2 475.8 597.2 495.7 600.0 505.0 C602.8 514.3 610.7 519.8 622.0 526.0 C633.3 532.2 660.3 539.3 668.0 542.0" fill="none" stroke="#94805f" stroke-width="14" stroke-linecap="butt"/>
<path d="M605.0 470.0 C604.2 475.8 597.2 495.7 600.0 505.0 C602.8 514.3 610.7 519.8 622.0 526.0 C633.3 532.2 660.3 539.3 668.0 542.0" fill="none" stroke="#c8bea9" stroke-width="4" opacity="0.6" transform="translate(-2,-3)"/>
<circle cx="668.0" cy="542.0" r="5" fill="#5a3a22" opacity="0.8"/>
<path d="M602.0 510.0 C601.3 516.3 595.5 538.0 598.0 548.0 C600.5 558.0 607.8 563.5 617.0 570.0 C626.2 576.5 647.0 584.2 653.0 587.0" fill="none" stroke="#3b2a1c" stroke-width="18" stroke-linecap="butt"/>
<path d="M602.0 510.0 C601.3 516.3 595.5 538.0 598.0 548.0 C600.5 558.0 607.8 563.5 617.0 570.0 C626.2 576.5 647.0 584.2 653.0 587.0" fill="none" stroke="#94805f" stroke-width="14" stroke-linecap="butt"/>
<path d="M602.0 510.0 C601.3 516.3 595.5 538.0 598.0 548.0 C600.5 558.0 607.8 563.5 617.0 570.0 C626.2 576.5 647.0 584.2 653.0 587.0" fill="none" stroke="#c8bea9" stroke-width="4" opacity="0.6" transform="translate(-2,-3)"/>
<circle cx="653.0" cy="587.0" r="5" fill="#5a3a22" opacity="0.8"/>
<path d="M598.0 552.0 C597.3 558.8 591.8 582.5 594.0 593.0 C596.2 603.5 602.8 609.2 611.0 615.0 C619.2 620.8 637.7 625.8 643.0 628.0" fill="none" stroke="#3b2a1c" stroke-width="18" stroke-linecap="butt"/>
<path d="M598.0 552.0 C597.3 558.8 591.8 582.5 594.0 593.0 C596.2 603.5 602.8 609.2 611.0 615.0 C619.2 620.8 637.7 625.8 643.0 628.0" fill="none" stroke="#94805f" stroke-width="14" stroke-linecap="butt"/>
<path d="M598.0 552.0 C597.3 558.8 591.8 582.5 594.0 593.0 C596.2 603.5 602.8 609.2 611.0 615.0 C619.2 620.8 637.7 625.8 643.0 628.0" fill="none" stroke="#c8bea9" stroke-width="4" opacity="0.6" transform="translate(-2,-3)"/>
<circle cx="643.0" cy="628.0" r="5" fill="#5a3a22" opacity="0.8"/>
<path d="M596.0 594.0 C595.3 601.2 589.8 625.8 592.0 637.0 C594.2 648.2 601.7 653.7 609.0 661.0 C616.3 668.3 631.5 677.7 636.0 681.0" fill="none" stroke="#3b2a1c" stroke-width="18" stroke-linecap="butt"/>
<path d="M596.0 594.0 C595.3 601.2 589.8 625.8 592.0 637.0 C594.2 648.2 601.7 653.7 609.0 661.0 C616.3 668.3 631.5 677.7 636.0 681.0" fill="none" stroke="#94805f" stroke-width="14" stroke-linecap="butt"/>
<path d="M596.0 594.0 C595.3 601.2 589.8 625.8 592.0 637.0 C594.2 648.2 601.7 653.7 609.0 661.0 C616.3 668.3 631.5 677.7 636.0 681.0" fill="none" stroke="#c8bea9" stroke-width="4" opacity="0.6" transform="translate(-2,-3)"/>
<circle cx="636.0" cy="681.0" r="5" fill="#5a3a22" opacity="0.8"/>
<path d="M592.0 636.0 C591.3 642.2 586.2 661.8 588.0 673.0 C589.8 684.2 596.3 695.2 603.0 703.0 C609.7 710.8 623.8 717.2 628.0 720.0" fill="none" stroke="#3b2a1c" stroke-width="18" stroke-linecap="butt"/>
<path d="M592.0 636.0 C591.3 642.2 586.2 661.8 588.0 673.0 C589.8 684.2 596.3 695.2 603.0 703.0 C609.7 710.8 623.8 717.2 628.0 720.0" fill="none" stroke="#94805f" stroke-width="14" stroke-linecap="butt"/>
<path d="M592.0 636.0 C591.3 642.2 586.2 661.8 588.0 673.0 C589.8 684.2 596.3 695.2 603.0 703.0 C609.7 710.8 623.8 717.2 628.0 720.0" fill="none" stroke="#c8bea9" stroke-width="4" opacity="0.6" transform="translate(-2,-3)"/>
<circle cx="628.0" cy="720.0" r="5" fill="#5a3a22" opacity="0.8"/>
<path d="M590.0 670.0 C589.3 675.3 584.7 692.2 586.0 702.0 C587.3 711.8 596.0 724.5 598.0 729.0" fill="none" stroke="#3b2a1c" stroke-width="18" stroke-linecap="butt"/>
<path d="M590.0 670.0 C589.3 675.3 584.7 692.2 586.0 702.0 C587.3 711.8 596.0 724.5 598.0 729.0" fill="none" stroke="#94805f" stroke-width="14" stroke-linecap="butt"/>
<path d="M590.0 670.0 C589.3 675.3 584.7 692.2 586.0 702.0 C587.3 711.8 596.0 724.5 598.0 729.0" fill="none" stroke="#c8bea9" stroke-width="4" opacity="0.6" transform="translate(-2,-3)"/>
<circle cx="598.0" cy="729.0" r="5" fill="#5a3a22" opacity="0.8"/>
</g>
<g>
<path d="M596 372 L622 380 C618 440 612 500 604 568 L592 572 C594 500 596 440 596 372Z" fill="#8f8473"/>
<path d="M562 400 C570 450 567 520 566 570 C569 582 586 582 590 572 C592 520 596 450 600 400Z" fill="#b4ac9d"/>
<path d="M575 410 C577 470 574 520 573 565" stroke="#dcd8d0" stroke-width="6" fill="none" opacity="0.8"/>
<path d="M539 365 H600 C602 385 598 405 585 412 C570 416 552 408 544 396 C538 386 538 375 539 365Z" fill="#aea491"/>
<ellipse cx="565" cy="382" rx="17" ry="12" fill="#c4bcab"/>
</g>
<g transform="translate(1493.0 0) scale(-1 1)">
<path d="M596 372 L622 380 C618 440 612 500 604 568 L592 572 C594 500 596 440 596 372Z" fill="#8f8473"/>
<path d="M562 400 C570 450 567 520 566 570 C569 582 586 582 590 572 C592 520 596 450 600 400Z" fill="#b4ac9d"/>
<path d="M575 410 C577 470 574 520 573 565" stroke="#dcd8d0" stroke-width="6" fill="none" opacity="0.8"/>
<path d="M539 365 H600 C602 385 598 405 585 412 C570 416 552 408 544 396 C538 386 538 375 539 365Z" fill="#aea491"/>
<ellipse cx="565" cy="382" rx="17" ry="12" fill="#c4bcab"/>
</g>
<rect x="722" y="365" width="49" height="364" fill="#a59a86"/>
<path d="M706 365 H787 L784 400 L773 445 L766 452 L764 585 L729 585 L727 452 L720 445 L709 400Z" fill="#aea38e"/>
<path d="M728 455 H765" stroke="#857868" stroke-width="1.5"/>
<path d="M728 465 H765" stroke="#857868" stroke-width="1.5"/>
<path d="M728 475 H765" stroke="#857868" stroke-width="1.5"/>
<path d="M728 485 H765" stroke="#857868" stroke-width="1.5"/>
<path d="M728 495 H765" stroke="#857868" stroke-width="1.5"/>
<path d="M728 505 H765" stroke="#857868" stroke-width="1.5"/>
<path d="M728 515 H765" stroke="#857868" stroke-width="1.5"/>
<path d="M728 525 H765" stroke="#857868" stroke-width="1.5"/>
<path d="M728 535 H765" stroke="#857868" stroke-width="1.5"/>
<path d="M728 545 H765" stroke="#857868" stroke-width="1.5"/>
<path d="M728 555 H765" stroke="#857868" stroke-width="1.5"/>
<path d="M728 565 H765" stroke="#857868" stroke-width="1.5"/>
<path d="M728 575 H765" stroke="#857868" stroke-width="1.5"/>
<path d="M720 598 H773" stroke="#4a3a2a" stroke-width="3"/>
<path d="M720 613 H773" stroke="#4a3a2a" stroke-width="3"/>
<path d="M720 640 H773" stroke="#4a3a2a" stroke-width="3"/>
<path d="M720 666 H773" stroke="#4a3a2a" stroke-width="3"/>
<path d="M720 692 H773" stroke="#4a3a2a" stroke-width="3"/>
<path d="M720 716 H773" stroke="#4a3a2a" stroke-width="3"/>
<path d="M704 700 C700 710 712 714 722 710 M789 700 C793 710 781 714 771 710" stroke="#b0a48c" stroke-width="8" fill="none"/>
<path d="M738 380 V720" stroke="#d0c9bb" stroke-width="7" opacity="0.45"/>
<path d="M760 380 V720" stroke="#6d604e" stroke-width="3" opacity="0.4"/></g></svg>
  <!-- ruler -->
  <svg class="abs" style="left:0;top:0" width="784" height="943" viewBox="348 75 784 943"><path d="M1114.0 358.4 V736.0 M1114.0 358.4 H1107.0 M1114.0 371.4 H1110.0 M1114.0 384.3 H1110.0 M1114.0 397.3 H1110.0 M1114.0 410.2 H1110.0 M1114.0 423.2 H1107.0 M1114.0 436.2 H1110.0 M1114.0 449.1 H1110.0 M1114.0 462.1 H1110.0 M1114.0 475.0 H1110.0 M1114.0 488.0 H1107.0 M1114.0 501.0 H1110.0 M1114.0 513.9 H1110.0 M1114.0 526.9 H1110.0 M1114.0 539.8 H1110.0 M1114.0 552.8 H1107.0 M1114.0 565.8 H1110.0 M1114.0 578.7 H1110.0 M1114.0 591.7 H1110.0 M1114.0 604.6 H1110.0 M1114.0 617.6 H1107.0 M1114.0 630.6 H1110.0 M1114.0 643.5 H1110.0 M1114.0 656.5 H1110.0 M1114.0 669.4 H1110.0 M1114.0 682.4 H1107.0 M1114.0 695.4 H1110.0 M1114.0 708.3 H1110.0 M1114.0 721.3 H1110.0" stroke="#c8c8c8" stroke-width="1.6" fill="none"/></svg>
  <div class="abs mm" style="left:710px;top:647px">280mm</div>
  <!-- buttons -->
  <div class="abs" style="left:264px;top:859.5px;width:60px;height:26.5px;border-radius:5px;background:#1b4fe2;color:#fff;font-size:17px;line-height:28px;text-align:center">VR</div>
  <div class="abs" style="left:329.5px;top:859.5px;width:60px;height:26.5px;border-radius:5px;background:#38393d;color:#fff;font-size:17px;line-height:28px;text-align:center">Axial</div>
  <div class="abs" style="left:395px;top:859.5px;width:60px;height:26.5px;border-radius:5px;background:#38393d;color:#fff;font-size:17px;line-height:28px;text-align:center;letter-spacing:-0.3px">Saggital</div>
  <div class="abs" style="left:460px;top:859.5px;width:60px;height:26.5px;border-radius:5px;background:#38393d;color:#fff;font-size:17px;line-height:28px;text-align:center;letter-spacing:-0.3px">Coronal</div>
</div>

<!-- RIGHT VIEWPORTS -->
<div class="vp" style="left:1134px;top:73px;width:786px;height:947px">
  <!-- pane1 axial -->
  <div class="ib" style="left:2px;top:3px;width:782px;height:310px"></div>
  <svg id="ax" class="abs" style="left:0;top:0" width="786" height="316" viewBox="1134 73 786 316"><defs><filter id="ctb" x="-5%" y="-5%" width="110%" height="110%"><feGaussianBlur stdDeviation="0.8"/></filter></defs>
<g filter="url(#ctb)">
<path d="M1374 334 C1370 348 1376 360 1396 368 C1420 377 1450 386 1480 392" fill="none" stroke="#eee" stroke-width="3"/>
<path d="M1374 334 C1378 333 1382 335 1384 337" fill="none" stroke="#eee" stroke-width="3"/>
<path d="M1681 360 C1670 368 1648 378 1615 388" fill="none" stroke="#ddd" stroke-width="2.5"/>
<path d="M1376 336 C1420 350 1470 366 1527 370 C1590 367 1640 350 1679 337" fill="none" stroke="#aaa" stroke-width="1.2" stroke-dasharray="3 2"/>
<path d="M1493 376 H1573 V386 H1493Z" fill="#eee"/><path d="M1516 376 H1551 V382 H1516Z" fill="#000"/>
<path d="M1556 153 C1580 148 1620 160 1635 185 C1642 198 1648 212 1646 222 C1630 205 1610 190 1590 175 C1575 168 1560 162 1556 153Z" fill="#888"/>
<path d="M1398 291 C1400 260 1410 238 1425 210 C1440 182 1465 160 1497 156 C1530 152 1570 156 1600 180 C1630 205 1652 240 1658 280 C1662 310 1645 330 1610 344 C1570 355 1500 356 1460 342 C1420 330 1398 315 1398 291Z" fill="#3c3c3c" stroke="#b8b8b8" stroke-width="1.5"/>
<path d="M1420 290 C1425 250 1440 210 1470 180 C1500 165 1560 165 1590 182 C1620 205 1640 250 1640 295 C1635 320 1610 336 1570 342 C1530 346 1480 344 1450 332 C1430 320 1418 308 1420 290Z" fill="#6e6e6e"/>
<path d="M1440 300 C1430 260 1440 215 1465 192 C1490 176 1510 178 1518 200 C1525 225 1512 255 1520 290 C1520 315 1500 328 1470 325 C1452 322 1444 312 1440 300Z" fill="#000"/>
<path d="M1620 300 C1630 260 1622 215 1597 192 C1575 176 1555 178 1547 200 C1542 230 1552 260 1545 290 C1545 315 1565 328 1590 325 C1608 322 1616 312 1620 300Z" fill="#000"/>
<path d="M1508 205 C1505 180 1530 170 1550 175 C1575 180 1580 210 1575 235 C1570 255 1560 262 1550 270 C1545 285 1532 287 1522 280 C1510 265 1510 240 1508 205Z" fill="#848484"/>
<ellipse cx="1528" cy="298" rx="11" ry="12" fill="#e6e6e6"/><ellipse cx="1528" cy="298" rx="5" ry="6" fill="#888"/>
<path d="M1505 320 C1515 310 1540 310 1550 320" fill="none" stroke="#f0f0f0" stroke-width="6"/>
<path d="M1470 340 L1490 338 M1565 338 L1585 340" stroke="#eee" stroke-width="4"/>
<path d="M1420 270 L1432 305 M1634 270 L1622 305 M1605 225 L1612 240 M1450 225 L1443 240" stroke="#f2f2f2" stroke-width="4"/>
<path d="M1505 172 H1550" stroke="#ddd" stroke-width="4"/>
</g></svg>
<svg class="abs" style="left:0;top:0" width="786" height="316" viewBox="1134 73 786 316"><path d="M1527 78 V199 M1527 261 V385" stroke="#b82020" stroke-width="2.4"/><path d="M1136 231 H1495 M1557 231 H1920" stroke="#1c1cb0" stroke-width="2.2"/></svg>
  <div class="ov" style="left:9px;top:12px">PName:S***a<br>AccNO:0004920555<br>Age:067Y<br>Sex:F</div>
  <div class="ov r" style="right:16px;top:12px">SD ZIBO NO.1 HOSP<br>2025-01-21 07:55:04<br>MONOCHROME2<br>Thorax 0.75 B31f<br><span class="grn" style="line-height:26px">Axial</span></div>
  <div class="ov" style="left:9px;top:258px">WW/WL:400/40<br>Zoom:0.6</div>
  <div class="ov r" style="right:16px;top:282px">SeNO:5</div>
  <div class="ov" style="left:387px;top:16px">A</div>
  <div class="ov" style="left:16px;top:151px">R</div>
  <svg class="abs" style="left:0;top:0" width="786" height="947" viewBox="1134 73 786 947"><path d="M1901.2 170.2 V293.0 M1901.2 170.2 H1894.2 M1901.2 178.4 H1897.2 M1901.2 186.6 H1897.2 M1901.2 194.8 H1897.2 M1901.2 203.0 H1897.2 M1901.2 211.1 H1894.2 M1901.2 219.3 H1897.2 M1901.2 227.5 H1897.2 M1901.2 235.7 H1897.2 M1901.2 243.9 H1897.2 M1901.2 252.1 H1894.2 M1901.2 260.3 H1897.2 M1901.2 268.5 H1897.2 M1901.2 276.7 H1897.2 M1901.2 284.9 H1897.2 M1901.2 293.0 H1894.2 M1901.2 485.2 V605.8 M1901.2 485.2 H1894.2 M1901.2 496.2 H1897.2 M1901.2 507.1 H1897.2 M1901.2 518.1 H1897.2 M1901.2 529.0 H1897.2 M1901.2 540.0 H1894.2 M1901.2 551.0 H1897.2 M1901.2 561.9 H1897.2 M1901.2 572.9 H1897.2 M1901.2 583.8 H1897.2 M1901.2 594.8 H1894.2 M1901.2 605.8 H1897.2 M1901.2 800.7 V921.3 M1901.2 800.7 H1894.2 M1901.2 811.7 H1897.2 M1901.2 822.6 H1897.2 M1901.2 833.6 H1897.2 M1901.2 844.5 H1897.2 M1901.2 855.5 H1894.2 M1901.2 866.5 H1897.2 M1901.2 877.4 H1897.2 M1901.2 888.4 H1897.2 M1901.2 899.3 H1897.2 M1901.2 910.3 H1894.2 M1901.2 921.3 H1897.2" stroke="#c8c8c8" stroke-width="1.5" fill="none"/></svg>
  <div class="abs mm" style="left:711px;top:219px">150mm</div>
  <!-- pane2 sagittal -->
  <div class="ib" style="left:2px;top:319px;width:782px;height:310px"></div>
  <svg id="sg" class="abs" style="left:0;top:316px" width="786" height="316" viewBox="1134 389 786 316"><defs><filter id="ctb2" x="-5%" y="-5%" width="110%" height="110%"><feGaussianBlur stdDeviation="0.8"/></filter></defs>
<g filter="url(#ctb2)">
<path d="M1514 389 C1495 410 1470 450 1450 500 C1436 540 1428 600 1426 650 L1425 705 H1672 C1673 660 1676 600 1680 560 C1686 520 1690 470 1682 440 C1672 410 1660 395 1656 389Z" fill="#3a3a3a"/>
<path d="M1514 389 C1495 410 1470 450 1450 500 C1436 540 1428 600 1426 650 L1425 705" fill="none" stroke="#9a9a9a" stroke-width="2"/>
<path d="M1656 389 C1660 395 1672 410 1682 440 C1690 470 1686 520 1680 560 C1676 600 1673 660 1672 705" fill="none" stroke="#9a9a9a" stroke-width="2"/>
<path d="M1500 400 C1485 425 1465 470 1455 510 C1445 550 1440 600 1440 650 L1440 705 H1600 L1600 392Z" fill="#6a6a6a"/>
<path d="M1516 415 C1500 440 1480 480 1465 530 C1455 565 1450 590 1447 610" fill="none" stroke="#ececec" stroke-width="7"/>
<path d="M1508 420 C1512 412 1520 418 1516 428" fill="none" stroke="#ddd" stroke-width="4"/>
<path d="M1471 470 C1480 460 1498 455 1502 470 C1500 500 1495 530 1480 545 C1472 540 1466 510 1471 470Z" fill="#111"/>
<path d="M1545 396 C1560 394 1572 400 1572 420 C1570 450 1568 470 1560 488 C1550 480 1546 450 1545 396Z" fill="#000"/>
<path d="M1532 492 C1560 480 1585 490 1591 520 C1595 570 1592 610 1580 636 C1562 640 1545 630 1540 612 C1550 580 1548 540 1532 492Z" fill="#000"/>
<path d="M1492 455 C1500 440 1525 432 1545 445 C1560 470 1570 510 1566 560 C1562 590 1550 610 1530 612 C1508 612 1494 590 1490 560 C1486 520 1486 480 1492 455Z" fill="#858585"/>
<path d="M1458 615 C1480 605 1530 600 1560 612 C1570 650 1565 690 1560 705 H1455 C1452 670 1452 640 1458 615Z" fill="#8a8a8a"/>
<path d="M1471 470 C1480 460 1492 458 1494 470 C1494 500 1490 530 1480 545 C1472 540 1466 510 1471 470Z" fill="#111"/>
<path d="M1545 396 C1560 394 1568 400 1570 420 C1570 450 1566 470 1558 488 C1550 480 1546 450 1545 396Z" fill="#000"/>
<path d="M1562 490 C1578 492 1588 505 1590 530 C1593 570 1590 610 1578 638 C1562 640 1552 630 1548 612 C1562 590 1568 560 1566 530 C1565 510 1562 500 1562 490Z" fill="#000"/>
<path d="M1563 389 C1575 420 1584 460 1588 500 C1592 540 1594 575 1590 610 C1585 650 1575 675 1562 705 L1598 705 C1610 675 1620 650 1624 610 C1628 575 1626 540 1622 500 C1618 460 1612 420 1603 389Z" fill="#e4e4e4"/>
<path d="M1566 405 H1604 M1572 425 H1610 M1577 445 H1615 M1580 465 H1618 M1582 485 H1620 M1584 505 H1622 M1586 525 H1624 M1587 545 H1625 M1587 565 H1625 M1586 585 H1624 M1584 605 H1622 M1580 625 H1618 M1575 645 H1613 M1570 665 H1608 M1565 685 H1602" stroke="#8a8a8a" stroke-width="2.5"/>
<path d="M1603 389 H1650 C1665 410 1676 440 1680 480 C1682 540 1676 600 1672 705 H1598 C1610 660 1624 600 1626 540 C1628 480 1620 430 1603 389Z" fill="#5e5e5e"/>
<path d="M1618 392 C1628 430 1634 480 1632 540 C1630 600 1622 660 1612 705" fill="none" stroke="#4a4a4a" stroke-width="7"/>
<path d="M1628 430 L1652 452 M1633 458 L1660 482 M1636 488 L1663 512 M1638 518 L1664 542 M1637 548 L1660 568 M1633 576 L1652 594 M1628 604 L1646 622 M1622 632 L1640 650" stroke="#f0f0f0" stroke-width="10"/>
<path d="M1630 400 L1650 420 M1640 395 L1660 412" stroke="#ddd" stroke-width="5"/>
<path d="M1689 389 C1690 410 1692 430 1700 445 C1712 460 1728 470 1730 490 V585" fill="none" stroke="#eee" stroke-width="3.5"/>
<path d="M1715 504 V705" stroke="#777" stroke-width="1.5"/>
</g></svg>
<svg class="abs" style="left:0;top:316px" width="786" height="316" viewBox="1134 389 786 316"><path d="M1527 392 V505 M1527 590 V700" stroke="#2424d8" stroke-width="2"/><path d="M1136 547.5 H1485 M1567 547.5 H1920" stroke="#1a8a1a" stroke-width="1.5"/></svg>
  <div class="ov" style="left:9px;top:327px">PName:S***a<br>AccNO:0004920555<br>Age:067Y<br>Sex:F</div>
  <div class="ov r" style="right:16px;top:327px">SD ZIBO NO.1 HOSP<br>2025-01-21 07:55:04<br>MONOCHROME2<br>Thorax 0.75 B31f<br><span class="grn" style="line-height:26px">Saggital</span></div>
  <div class="ov" style="left:9px;top:574px">WW/WL:400/40<br>Zoom:0.8</div>
  <div class="ov r" style="right:16px;top:598px">SeNO:5</div>
  <div class="ov" style="left:386px;top:332px">H</div>
  <div class="ov" style="left:16px;top:467px">A</div>
  <div class="abs mm" style="left:711px;top:533px">110mm</div>
  <!-- pane3 coronal -->
  <div class="ib" style="left:2px;top:635px;width:782px;height:309px"></div>
  <svg id="co" class="abs" style="left:0;top:632px" width="786" height="315" viewBox="1134 705 786 315"><defs><filter id="ctb3" x="-5%" y="-5%" width="110%" height="110%"><feGaussianBlur stdDeviation="0.8"/></filter></defs>
<g filter="url(#ctb3)">
<path d="M1358 708 H1731 C1720 740 1700 760 1691 797 C1692 850 1692 900 1690 950 L1688 1019 H1389 C1383 960 1378 900 1374 828 C1368 780 1360 740 1358 708Z" fill="#848484"/>
<path d="M1358 708 C1360 740 1368 780 1374 828 C1378 900 1383 960 1389 1019 L1408 1019 C1402 960 1398 900 1396 840 C1394 790 1392 750 1398 708Z" fill="#3c3c3c"/>
<path d="M1700 708 C1696 740 1682 770 1680 797 C1680 850 1680 900 1678 950 L1676 1019 H1688 L1690 950 C1692 900 1692 850 1691 797 C1700 760 1720 740 1731 708Z" fill="#3c3c3c"/>
<path d="M1675 780 C1670 830 1668 900 1666 1019 H1680 C1680 900 1682 830 1685 780Z" fill="#555"/>
<path d="M1475 748 C1450 750 1428 770 1423 797 C1416 840 1413 880 1414 920 C1414 950 1415 965 1416 976 C1425 955 1440 940 1460 934 C1480 928 1495 922 1503 920 C1504 880 1504 800 1503 755 C1495 748 1485 747 1475 748Z" fill="#000"/>
<path d="M1562 751 C1580 749 1605 750 1617 754 C1632 770 1640 785 1642 797 C1647 840 1648 880 1648 910 C1650 940 1651 960 1651 976 C1645 960 1640 950 1632 945 C1610 938 1580 932 1556 930 C1575 925 1590 920 1599 914 C1605 900 1603 890 1602 877 C1598 850 1590 840 1580 834 C1568 820 1560 810 1556 797 C1552 785 1552 775 1562 751Z" fill="#000"/>
<path d="M1531 862 C1550 855 1580 852 1600 870 C1605 890 1603 910 1595 922 C1575 928 1550 928 1531 926Z" fill="#8c8c8c"/>
<path d="M1416 976 C1425 955 1440 940 1460 934 C1480 928 1495 922 1503 920 L1530 926 L1532 1019 H1412Z" fill="#8e8e8e"/>
<path d="M1532 930 C1580 932 1610 938 1632 945 C1645 955 1650 970 1651 1000 L1652 1019 H1532Z" fill="#4e4e4e"/>
<g fill="#8a8a8a"><circle cx="1585" cy="962" r="13"/><circle cx="1556" cy="992" r="11"/><circle cx="1598" cy="998" r="11"/><circle cx="1622" cy="975" r="8"/><circle cx="1548" cy="955" r="8"/><circle cx="1630" cy="1005" r="7"/></g>
<ellipse cx="1496" cy="722" rx="14" ry="11" fill="#eee"/><ellipse cx="1496" cy="722" rx="6" ry="5" fill="#777"/>
<ellipse cx="1570" cy="729" rx="15" ry="12" fill="#eee"/><ellipse cx="1570" cy="729" rx="6" ry="5" fill="#777"/>
<path d="M1468 740 C1480 736 1490 738 1492 742 M1580 742 C1590 740 1600 742 1604 746" stroke="#f0f0f0" stroke-width="5"/>
<g fill="#f0f0f0"><ellipse cx="1447" cy="760" rx="3.5" ry="5"/><ellipse cx="1426" cy="797" rx="3.5" ry="6"/><ellipse cx="1419" cy="834" rx="3.5" ry="6"/><ellipse cx="1417" cy="868" rx="3.5" ry="6"/><ellipse cx="1415" cy="899" rx="3.5" ry="6"/><ellipse cx="1410" cy="939" rx="3.5" ry="6"/><ellipse cx="1413" cy="976" rx="3.5" ry="6"/><ellipse cx="1422" cy="1003" rx="5" ry="6"/>
<ellipse cx="1622" cy="761" rx="3.5" ry="5"/><ellipse cx="1640" cy="794" rx="3.5" ry="6"/><ellipse cx="1645" cy="825" rx="3.5" ry="6"/><ellipse cx="1647" cy="859" rx="3.5" ry="6"/><ellipse cx="1652" cy="896" rx="3.5" ry="6"/><ellipse cx="1655" cy="933" rx="3.5" ry="6"/><ellipse cx="1654" cy="973" rx="3.5" ry="6"/><ellipse cx="1650" cy="1005" rx="5" ry="6"/></g>
</g></svg>
<svg class="abs" style="left:0;top:632px" width="786" height="315" viewBox="1134 705 786 315"><path d="M1527 708 V822 M1527 904 V1019" stroke="#b82020" stroke-width="2.4"/><path d="M1136 862.5 H1485 M1567 862.5 H1920" stroke="#1a8a1a" stroke-width="1.5"/></svg>
  <div class="ov" style="left:9px;top:643px">PName:S***a<br>AccNO:0004920555<br>Age:067Y<br>Sex:F</div>
  <div class="ov r" style="right:16px;top:643px">SD ZIBO NO.1 HOSP<br>2025-01-21 07:55:04<br>MONOCHROME2<br>Thorax 0.75 B31f<br><span class="grn" style="line-height:26px">Coronal</span></div>
  <div class="ov" style="left:9px;top:889px">WW/WL:400/40<br>Zoom:0.8</div>
  <div class="ov r" style="right:16px;top:913px">SeNO:5</div>
  <div class="ov" style="left:386px;top:648px">H</div>
  <div class="ov" style="left:16px;top:782px">R</div>
  <div class="abs mm" style="left:711px;top:849px">110mm</div>
  <!-- collapse btn -->
  <div class="abs" style="left:755px;top:677px;width:50px;height:43px;border-radius:22px;background:linear-gradient(90deg,#4f8ff0,#2a6cf0)"><svg class="abs" style="left:13px;top:13px" width="10" height="17" viewBox="0 0 10 17"><path d="M8 2 L2.5 8.5 L8 15" fill="none" stroke="#fff" stroke-width="2.2"/></svg></div>
</div>

</body></html>
